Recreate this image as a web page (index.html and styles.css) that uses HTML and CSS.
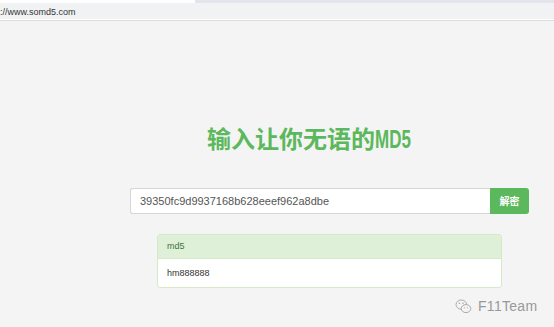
FILE: index.html
```html
<!DOCTYPE html>
<html>
<head>
<meta charset="utf-8">
<link rel="stylesheet" href="styles.css">
</head>
<body>
<div class="chrome">
  <div class="tabstrip"><div class="tab-left"></div><div class="tab-right"></div></div>
  <div class="addr">://www.somd5.com</div>
</div>
<div class="page">
  <h1 class="title">输入让你无语的<span class="latin">MD5</span></h1>
  <div class="search">
    <div class="input">39350fc9d9937168b628eeef962a8dbe</div>
    <div class="btn">解密</div>
  </div>
  <div class="panel">
    <div class="panel-head">md5</div>
    <div class="panel-body">hm888888</div>
  </div>
  <div class="watermark">
    <svg class="wm-icon" width="17" height="15" viewBox="0 0 17 15">
      <ellipse cx="6.3" cy="5.6" rx="5.3" ry="4.6" fill="none" stroke="#aaa" stroke-width="1"/>
      <ellipse cx="11" cy="9.6" rx="4.8" ry="4" fill="#f4f4f4" stroke="#aaa" stroke-width="1"/>
      <circle cx="4.4" cy="4.3" r="0.8" fill="#aaa"/>
      <circle cx="8" cy="4.3" r="0.8" fill="#aaa"/>
      <circle cx="9.4" cy="8.8" r="0.6" fill="#aaa"/>
      <circle cx="12.6" cy="8.8" r="0.6" fill="#aaa"/>
    </svg>
    <span class="wm-text">F11Team</span>
  </div>
</div>
</body>
</html>
```
FILE: styles.css
```css
html, body {
  margin: 0;
  padding: 0;
  background: #f4f4f4;
  font-family: "Liberation Sans", Arial, "Noto Sans CJK SC", sans-serif;
}
.chrome {
  background: #f1f2f4;
  border-bottom: 1px solid #dcdcdf;
}
.tabstrip {
  display: flex;
  height: 3px;
}
.tab-left {
  width: 195px;
  background: #ffffff;
}
.tab-right {
  flex: 1;
  background: #e4e4ec;
}
.addr {
  height: 16px;
  line-height: 18px;
  font-size: 9px;
  color: #333;
  border-bottom: 1px solid #ffffff;
  background: #f1f2f4;
}
.page {
  display: flex;
  flex-direction: column;
  height: 306px;
}
.title {
  margin: 102px 0 0 207px;
  font-family: "Noto Sans CJK SC", sans-serif;
  font-weight: 700;
  font-size: 24px;
  line-height: 30px;
  color: #5cb85c;
  white-space: nowrap;
}
.latin {
  display: inline-block;
  font-family: "Liberation Sans", Arial, sans-serif;
  font-weight: 700;
  font-size: 25px;
  transform: scaleX(0.68);
  transform-origin: left center;
}
.search {
  display: flex;
  margin: 34px 0 0 130px;
  width: 399px;
  height: 26px;
}
.input {
  flex: 1;
  box-sizing: border-box;
  background: #fff;
  border: 1px solid #d6d6d6;
  border-right: none;
  border-radius: 3px 0 0 3px;
  padding-left: 9px;
  font-size: 11px;
  line-height: 24px;
  color: #555;
}
.btn {
  width: 39px;
  background: #5cb85c;
  border-radius: 0 3px 3px 0;
  color: #fff;
  font-family: "Noto Sans CJK SC", sans-serif;
  font-weight: 700;
  font-size: 10px;
  line-height: 26px;
  text-align: center;
}
.panel {
  margin: 20px 0 0 157px;
  width: 345px;
  box-sizing: border-box;
  border: 1px solid #d6e9c6;
  border-radius: 3px;
  background: #fff;
  font-size: 9px;
}
.panel-head {
  height: 23px;
  line-height: 22px;
  background: #dff0d8;
  color: #3c763d;
  padding-left: 9px;
  border-bottom: 1px solid #d6e9c6;
}
.panel-body {
  height: 28px;
  line-height: 28px;
  padding-left: 9px;
  color: #333;
}
.watermark {
  display: flex;
  align-items: center;
  gap: 6px;
  margin: 10px 0 0 455px;
}
.wm-icon {
  display: block;
}
.wm-text {
  font-family: "Liberation Sans", Arial, sans-serif;
  font-size: 14px;
  color: #999;
  letter-spacing: 0.3px;
}
```
